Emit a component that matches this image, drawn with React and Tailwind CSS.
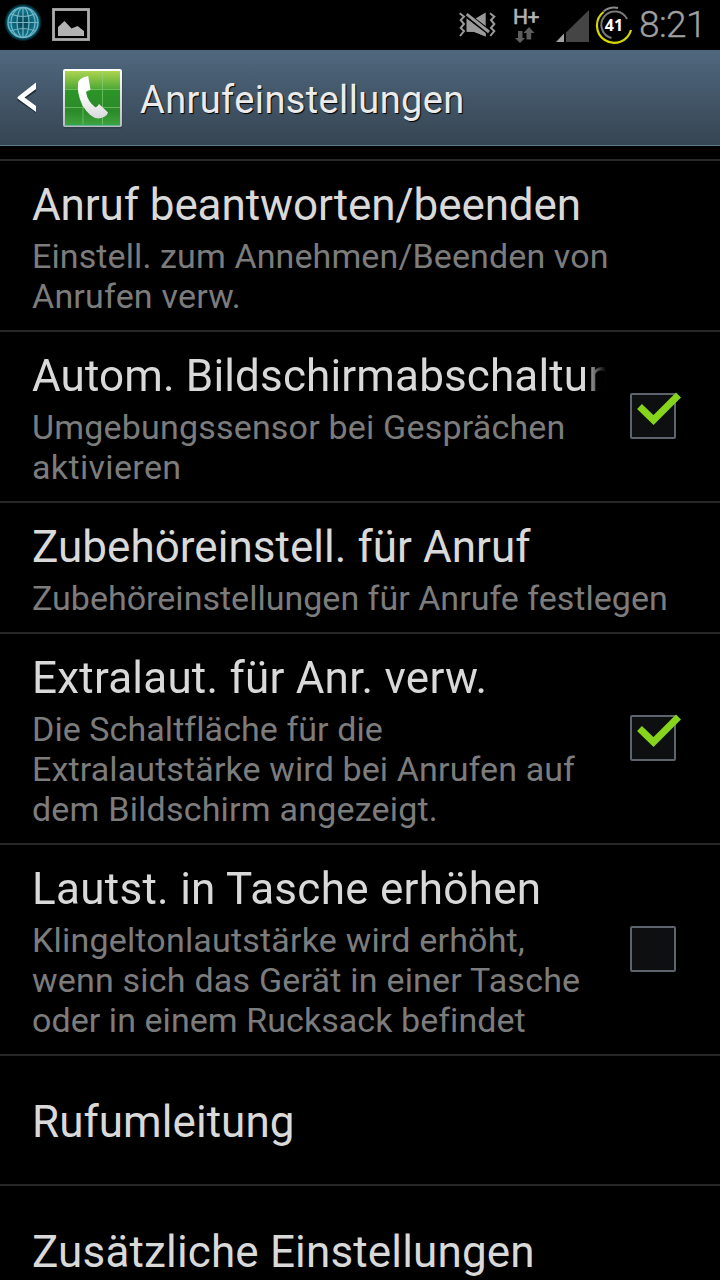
const settings = [
  {
    title: 'Anruf beantworten/beenden',
    titleClass: 'tracking-[-0.1px]',
    summary: [
      { text: 'Einstell. zum Annehmen/Beenden von', className: 'tracking-[0.11px]' },
      { text: 'Anrufen verw.', className: 'tracking-[0.2px]' },
    ],
  },
  {
    title: 'Autom. Bildschirmabschaltung',
    titleClass: 'tracking-[0.14px]',
    summary: [
      { text: 'Umgebungssensor bei Gesprächen', className: 'tracking-[0.19px]' },
      { text: 'aktivieren', className: 'tracking-[0.35px]' },
    ],
    checked: true,
  },
  {
    title: 'Zubehöreinstell. für Anruf',
    titleClass: 'tracking-[0.04px]',
    summary: [{ text: 'Zubehöreinstellungen für Anrufe festlegen', className: 'tracking-[0.01px]' }],
  },
  {
    title: 'Extralaut. für Anr. verw.',
    titleClass: 'tracking-[0.22px]',
    summary: [
      { text: 'Die Schaltfläche für die', className: 'tracking-[0.07px]' },
      { text: 'Extralautstärke wird bei Anrufen auf', className: 'tracking-[0.12px]' },
      { text: 'dem Bildschirm angezeigt.', className: 'tracking-[0.2px]' },
    ],
    checked: true,
  },
  {
    title: 'Lautst. in Tasche erhöhen',
    titleClass: 'tracking-[0.28px]',
    summary: [
      { text: 'Klingeltonlautstärke wird erhöht,', className: 'tracking-[0.19px]' },
      { text: 'wenn sich das Gerät in einer Tasche', className: 'tracking-[0.21px]' },
      { text: 'oder in einem Rucksack befindet', className: 'tracking-[0.06px]' },
    ],
    checked: false,
  },
  { title: 'Rufumleitung', titleClass: 'tracking-[0.05px]' },
  { title: 'Zusätzliche Einstellungen', titleClass: 'tracking-[0.16px]' },
]

function GlobeIcon() {
  return (
    <svg width="46" height="50" viewBox="0 0 46 50" fill="none">
      <defs>
        <radialGradient id="globeGlow">
          <stop offset="0.78" stopColor="#087b96" />
          <stop offset="1" stopColor="#087b96" stopOpacity="0" />
        </radialGradient>
        <radialGradient id="globeFill">
          <stop offset="0" stopColor="#043d4b" />
          <stop offset="1" stopColor="#127f9b" />
        </radialGradient>
      </defs>
      <circle cx="23" cy="22.5" r="19" fill="url(#globeGlow)" />
      <circle cx="23" cy="22.5" r="15" fill="url(#globeFill)" stroke="#6fb3c3" strokeWidth="1.3" />
      <g stroke="#78b5c2" strokeWidth="1.2">
        <ellipse cx="23" cy="22.5" rx="6" ry="15" />
        <ellipse cx="23" cy="22.5" rx="12" ry="15" />
        <path d="M23 7.500v30M8 22.500h30M11 14q12 5 24 0M11 31q12-5 24 0" />
      </g>
    </svg>
  )
}

function PictureIcon() {
  return (
    <svg width="38" height="34" viewBox="0 0 38 34">
      <rect x="1.500" y="1.500" width="35" height="30" fill="none" stroke="#adadad" strokeWidth="2.800" />
      <path d="M6 28v-9l6.500-6 7 7.500 6-2.500 6.500 5v5z" fill="#b3b3b3" />
    </svg>
  )
}

function VibrateMuteIcon() {
  return (
    <svg width="38" height="28" viewBox="0 0 38 28">
      <g fill="none" stroke="#9a9a9a" strokeWidth="2">
        <path d="M.7 1.300L5 4.700 1.700 8 5 12l-3.300 4L5 19l-4 5" />
        <path d="M31 1.300l4.300 3.400L32 8l3.300 4-3.300 4 3.300 3-4 5" />
      </g>
      <path d="M7.700 5v14.700H15L26.700 24.500v-5z" fill="#9a9a9a" />
      <path d="M16.500 6.500l10.200-6v14.500z" fill="#9a9a9a" />
      <path d="M8 3.500L30 20" stroke="#000" strokeWidth="5.500" />
      <path d="M7.700 2.200L30 20" stroke="#9a9a9a" strokeWidth="3" />
      <path d="M7.700 6.500v13.200H15l11.700 4.800v-3z" fill="#9a9a9a" />
    </svg>
  )
}

function DataIcon() {
  return (
    <div className="flex h-full w-[28px] flex-col pt-[8px]">
      <span className="text-[21px] leading-[19px] tracking-[-0.4px] text-[#b4b4b4] [-webkit-text-stroke:0.6px_#b4b4b4]">H+</span>
      <svg className="ml-[2px]" width="22" height="16" viewBox="0 0 22 16" fill="#5d5d5d">
        <path d="M3 4h4.500v7H10l-5 5-5-5h3z" />
        <path d="M11.500 12.500V6H8.500L14 0l5.500 6h-3.300v6.500z" />
      </svg>
    </div>
  )
}

function SignalIcon() {
  return (
    <svg width="34" height="34" viewBox="0 0 34 34">
      <path d="M10 23.500L33 1v32H10z" fill="#454545" />
      <path d="M0 33l8-8.500V33z" fill="#a0a0a0" />
    </svg>
  )
}

function BatteryIcon() {
  return (
    <svg width="38" height="40" viewBox="0 0 38 40" fill="none">
      <path d="M36 25A17.300 17.300 0 1 1 8.500 7" stroke="#d5d500" strokeWidth="2.200" />
      <path d="M8.500 6.500A17.300 17.300 0 0 1 23 3" stroke="#8a8a8a" strokeWidth="2" />
      <path d="M16.500 33A13.500 13.500 0 1 1 32 14" stroke="#777" strokeWidth="2" />
      <text x="19" y="26.200" textAnchor="middle" fill="#fff" fontFamily="Open Sans" fontWeight="700" fontSize="16">
        41
      </text>
    </svg>
  )
}

function StatusBar() {
  return (
    <div className="flex h-[50px] items-start justify-between">
      <div className="flex items-start">
        <GlobeIcon />
        <div className="pt-[8px] pl-[6px]">
          <PictureIcon />
        </div>
      </div>
      <div className="flex h-full items-start pr-[12px]">
        <div className="mr-[16px] pt-[12px]">
          <VibrateMuteIcon />
        </div>
        <DataIcon />
        <div className="ml-[15px] pt-[9px]">
          <SignalIcon />
        </div>
        <div className="ml-[5px] pt-[5px]">
          <BatteryIcon />
        </div>
        <span className="ml-[6px] w-[69px] pt-[4px] text-[37px] leading-[42px] font-light tracking-[-0.6px] whitespace-nowrap text-[#a0a0a0] [-webkit-text-stroke:0.3px_#a0a0a0]">
          8:21
        </span>
      </div>
    </div>
  )
}

function PhoneIcon() {
  return (
    <svg width="60" height="60" viewBox="0 0 60 60">
      <defs>
        <linearGradient id="phoneGreen" x1="0" y1="0" x2="0" y2="1">
          <stop offset="0" stopColor="#add44f" />
          <stop offset="0.33" stopColor="#4fa936" />
          <stop offset="0.36" stopColor="#2c9527" />
          <stop offset="0.75" stopColor="#2b8a2a" />
          <stop offset="1" stopColor="#3fa33c" />
        </linearGradient>
        <linearGradient id="phoneFrame" x1="0" y1="0" x2="0" y2="1">
          <stop offset="0" stopColor="#fff" />
          <stop offset="1" stopColor="#b9bcbc" />
        </linearGradient>
        <linearGradient id="handset" x1="0" y1="0" x2="0" y2="1">
          <stop offset="0.4" stopColor="#fff" />
          <stop offset="1" stopColor="#d9d9dc" />
        </linearGradient>
      </defs>
      <rect x="0.500" y="0.500" width="59" height="59" rx="2" fill="#26343f" opacity="0.5" />
      <rect x="0" y="0" width="59" height="58" rx="2" fill="url(#phoneFrame)" />
      <rect x="2" y="2" width="55" height="54" fill="url(#phoneGreen)" />
      <path d="M20 2v54M39.500 2v54M2 20.500H57M2 38.500H57" stroke="#8fd07f" strokeWidth="0.900" opacity="0.650" />
      <path d="M2 56H57" stroke="#1fa66b" strokeWidth="1" />
      <path
        d="M15.200 13Q17 8.500 25.200 7l2.300 14q-3 .5-4.500 2 1.500 9.500 9.500 15.500 2.500-1 3.500-3.500l9 8.500q-1.500 5-9.500 6-8 0-16-13Q13.500 24 15.200 13z"
        fill="url(#handset)"
      />
    </svg>
  )
}

function Header() {
  return (
    <header className="flex h-[96px] items-start border-b border-[#5c7c8b] bg-linear-to-b from-[#50687f] to-[#364552]">
      <svg className="mt-[31px] ml-[16px]" width="22" height="33" viewBox="0 0 22 33">
        <path d="M20 4.500v6L9.500 17.500 20 26v6L1.500 19.500v-4z" fill="#1f2c36" />
        <path d="M20 1.500v6.500L8.500 16.500 20 25v6L1.500 17.500v-1.500z" fill="#fff" />
      </svg>
      <div className="mt-[19px] ml-[25px]">
        <PhoneIcon />
      </div>
      <h1 className="mt-[28px] ml-[17px] text-[38px] leading-[44px] tracking-[0.38px] text-[#ebebeb] [text-shadow:1px_1px_1px_#000]">
        Anrufeinstellungen
      </h1>
    </header>
  )
}

function Checkbox({ checked }) {
  return (
    <svg className="shrink-0" width="54" height="54" viewBox="0 0 54 54">
      <rect x="1" y="5" width="44" height="44" rx="1" fill="#0d0f10" stroke="#5e646d" strokeWidth="2" />
      {checked && <path d="M9.500 17.500l14 13.500L48.500 6" fill="none" stroke="#86d41c" strokeWidth="7" />}
    </svg>
  )
}

function SettingRow({ item }) {
  const hasCheckbox = item.checked !== undefined

  return (
    <li className="flex items-center border-b-2 border-[#272727] pl-[32px]">
      <div className={hasCheckbox ? 'w-[574px] shrink-0' : 'min-w-0 flex-1'}>
        <div className={item.summary ? 'pt-[18px] pb-[14px]' : 'pt-[40px] pb-[36px]'}>
          <div
            className={`overflow-hidden text-[44px] leading-[52px] whitespace-nowrap text-[#d9d9d9] ${item.titleClass} ${
              hasCheckbox ? 'mask-r-from-[calc(100%-22px)] mask-r-to-100%' : ''
            }`}
          >
            {item.title}
          </div>
          {item.summary && (
            <div className="pt-[5px] text-[34px] leading-[40px] whitespace-nowrap text-[#7c7c7c]">
              {item.summary.map(line => (
                <div key={line.text} className={line.className}>
                  {line.text}
                </div>
              ))}
            </div>
          )}
        </div>
      </div>
      {hasCheckbox && (
        <div className="mb-[2px] ml-[24px]">
          <Checkbox checked={item.checked} />
        </div>
      )}
    </li>
  )
}

export default function App() {
  return (
    <div className="h-[1280px] w-[720px] overflow-hidden bg-black font-['Roboto',sans-serif]">
      <StatusBar />
      <Header />
      <ul className="mt-[13px] border-t-2 border-[#272727]">
        {settings.map(item => (
          <SettingRow key={item.title} item={item} />
        ))}
      </ul>
    </div>
  )
}
